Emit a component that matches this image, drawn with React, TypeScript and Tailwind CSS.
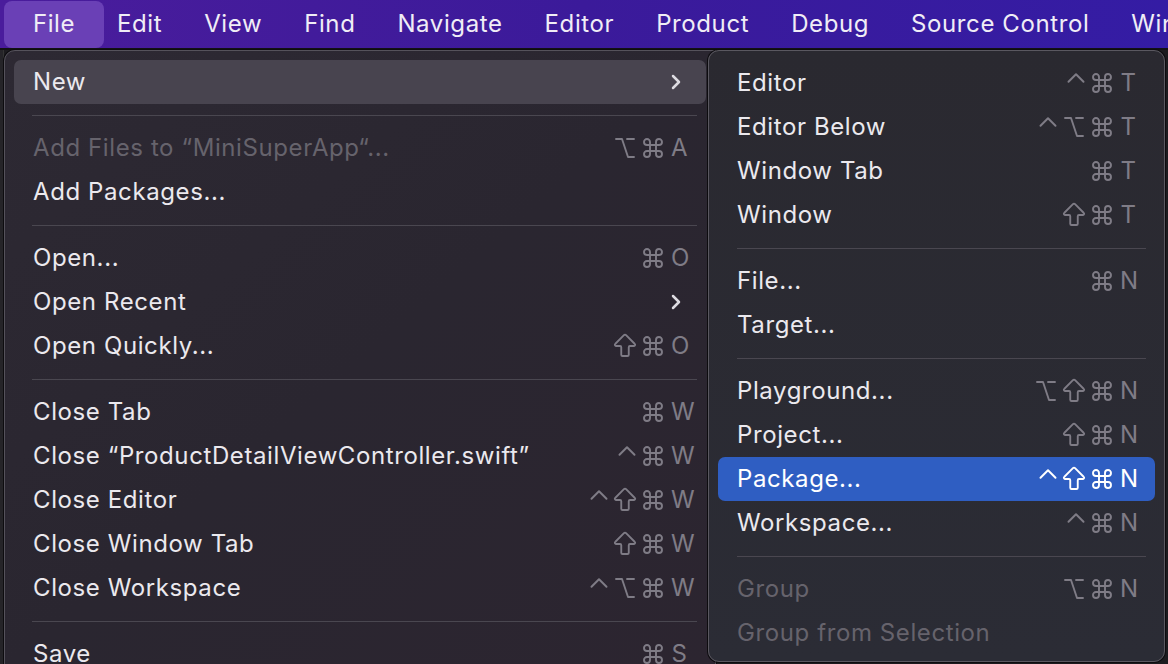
import { ArrowBigUp, ChevronRight, ChevronUp, Command, Option } from 'lucide-react';

type Item =
  | { sep: true }
  | { label: string; keys?: string[]; disabled?: boolean; sub?: boolean; active?: boolean; hot?: boolean };

const fileMenu: Item[] = [
  { label: 'New', sub: true, active: true },
  { sep: true },
  { label: 'Add Files to “MiniSuperApp“...', keys: ['opt', 'cmd', 'A'], disabled: true },
  { label: 'Add Packages...' },
  { sep: true },
  { label: 'Open...', keys: ['cmd', 'O'] },
  { label: 'Open Recent', sub: true },
  { label: 'Open Quickly...', keys: ['shift', 'cmd', 'O'] },
  { sep: true },
  { label: 'Close Tab', keys: ['cmd', 'W'] },
  { label: 'Close “ProductDetailViewController.swift”', keys: ['ctrl', 'cmd', 'W'] },
  { label: 'Close Editor', keys: ['ctrl', 'shift', 'cmd', 'W'] },
  { label: 'Close Window Tab', keys: ['shift', 'cmd', 'W'] },
  { label: 'Close Workspace', keys: ['ctrl', 'opt', 'cmd', 'W'] },
  { sep: true },
  { label: 'Save', keys: ['cmd', 'S'] },
];

const newMenu: Item[] = [
  { label: 'Editor', keys: ['ctrl', 'cmd', 'T'] },
  { label: 'Editor Below', keys: ['ctrl', 'opt', 'cmd', 'T'] },
  { label: 'Window Tab', keys: ['cmd', 'T'] },
  { label: 'Window', keys: ['shift', 'cmd', 'T'] },
  { sep: true },
  { label: 'File...', keys: ['cmd', 'N'] },
  { label: 'Target...' },
  { sep: true },
  { label: 'Playground...', keys: ['opt', 'shift', 'cmd', 'N'] },
  { label: 'Project...', keys: ['shift', 'cmd', 'N'] },
  { label: 'Package...', keys: ['ctrl', 'shift', 'cmd', 'N'], hot: true },
  { label: 'Workspace...', keys: ['ctrl', 'cmd', 'N'] },
  { sep: true },
  { label: 'Group', keys: ['opt', 'cmd', 'N'], disabled: true },
  { label: 'Group from Selection', disabled: true },
];

const menuBar = ['Edit', 'View', 'Find', 'Navigate', 'Editor', 'Product', 'Debug', 'Source Control', 'Window'];

function Key({ k }: { k: string }) {
  if (k === 'cmd')
    return (
      <span className="flex w-[20px] justify-center">
        <Command size={24} strokeWidth={1.9} className="shrink-0" />
      </span>
    );
  if (k === 'opt')
    return (
      <span className="flex w-[20px] justify-center">
        <Option size={24} strokeWidth={1.9} className="shrink-0" />
      </span>
    );
  if (k === 'shift')
    return (
      <span className="flex w-[20px] justify-center">
        <ArrowBigUp size={30} strokeWidth={1.5} className="shrink-0" />
      </span>
    );
  if (k === 'ctrl')
    return (
      <span className="flex w-[17px] -translate-y-[5px] justify-center">
        <ChevronUp size={30} strokeWidth={1.6} className="shrink-0" />
      </span>
    );
  return <span className="w-[17px] text-center">{k}</span>;
}

function Keys({ keys, hot }: { keys: string[]; hot?: boolean }) {
  return (
    <div className={`flex items-center gap-[8px] ${hot ? 'text-white' : 'text-[#7f7c86]'}`}>
      {keys.map((k, i) => (
        <Key key={i} k={k} />
      ))}
    </div>
  );
}

function Rows({ items, inset }: { items: Item[]; inset: string }) {
  return (
    <>
      {items.map((it, i) => {
        if ('sep' in it) {
          return (
            <div key={i} className={`flex h-[22px] items-center ${inset}`}>
              <div className="h-px w-full bg-[#4a4750]" />
            </div>
          );
        }
        const bg = it.active ? 'bg-[#48444f]' : it.hot ? 'bg-[#2f5ec2]' : '';
        const color = it.disabled ? 'text-[#66636c]' : it.hot ? 'text-white' : 'text-[#ebe9ee]';
        return (
          <div key={i} className={`mx-[9px] flex h-[44px] items-center justify-between rounded-[7px] pl-[19px] pr-[18px] ${bg}`}>
            <span className={`whitespace-nowrap ${color}`}>{it.label}</span>
            {it.keys && <Keys keys={it.keys} hot={it.hot} />}
            {it.sub && <ChevronRight className="h-6 w-6 text-[#dedce2]" strokeWidth={2.5} />}
          </div>
        );
      })}
    </>
  );
}

export default function App() {
  return (
    <div className="flex h-[664px] w-[1168px] flex-col overflow-hidden bg-[#1c1b1f] font-['Inter',sans-serif] text-[24px] tracking-[0.6px]">
      <div className="flex h-[48px] shrink-0 items-center overflow-hidden bg-gradient-to-r from-[#4a1c9c] via-[#3b1a9a] to-[#341ca4] pl-[4px] text-[#f0edf6]">
        <div className="flex h-[47px] w-[100px] shrink-0 items-center justify-center rounded-[8px] bg-[#6a40b6]">File</div>
        <div className="ml-[13px] flex shrink-0 gap-[42px] whitespace-nowrap">
          {menuBar.map((m) => (
            <span key={m}>{m}</span>
          ))}
        </div>
      </div>
      <div className="h-[2px] shrink-0 bg-[#121114]" />
      <div className="flex flex-1 items-start">
        <div className="h-full w-[4px] shrink-0 border-r border-[#333] bg-[#252428]" />
        <div className="h-[620px] w-[712px] shrink-0 rounded-tl-[11px] border border-[#55525b] bg-gradient-to-br from-[#2d2933] via-[#2a2630] to-[#2c2530] pt-[9px] shadow-[0_0_0_1px_#0d0c0f]">
          <Rows items={fileMenu} inset="pl-[27px] pr-[18px]" />
        </div>
        <div className="-ml-[8px] h-[612px] w-[457px] shrink-0 rounded-[11px] border border-[#5a5860] bg-gradient-to-b from-[#2a2930] to-[#2b2c35] pt-[10px] shadow-[0_0_0_1px_#0d0c0f]">
          <Rows items={newMenu} inset="pl-[28px] pr-[18px]" />
        </div>
      </div>
    </div>
  );
}
